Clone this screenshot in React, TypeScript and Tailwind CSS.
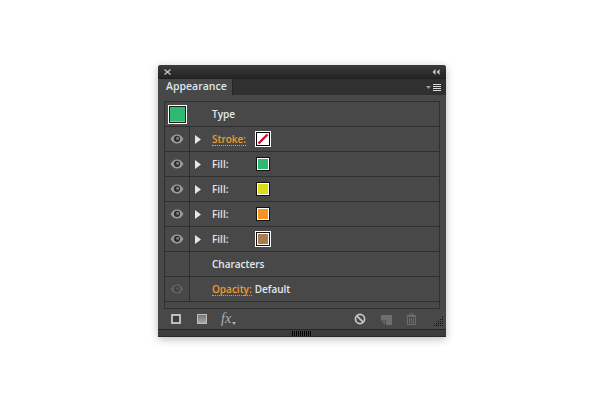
import React from 'react';

const Eye = ({ dim }: { dim?: boolean }) => (
  <svg width="14" height="10" viewBox="0 0 14 10" className={dim ? 'opacity-30' : ''}>
    <path d="M0.5 5 C3 1 5 0.5 7 0.5 C9 0.5 11 1 13.5 5 C11 9 9 9.5 7 9.5 C5 9.5 3 9 0.5 5 Z" fill="#9a9a9a" />
    <circle cx="7" cy="4.8" r="3.1" fill="#2e2e2e" />
    <circle cx="7.6" cy="4.4" r="1.3" fill="#8a8a8a" />
  </svg>
);

const Arrow = () => (
  <svg width="6" height="9" viewBox="0 0 6 9" className="block">
    <path d="M0 0 L6 4.5 L0 9 Z" fill="#e6e6e6" />
  </svg>
);

const Swatch = ({ color, selected }: { color: string; selected?: boolean }) =>
  selected ? (
    <div className="w-[16px] h-[16px] ml-px border border-white bg-[#111] p-px">
      <div className="w-full h-full border border-white" style={{ backgroundColor: color }} />
    </div>
  ) : (
    <div className="w-[14px] h-[14px] border border-[#111] bg-white p-px ml-[2px]">
      <div className="w-full h-full" style={{ backgroundColor: color }} />
    </div>
  );

const Row = ({ children, eye, divider = true, dim }: { children: React.ReactNode; eye?: boolean; divider?: boolean; dim?: boolean }) => (
  <div className="flex h-[25px] border-b border-[#2f2f2f] items-stretch">
    <div className={`w-[25px] flex items-center justify-center shrink-0 ${divider ? 'border-r border-[#2f2f2f]' : 'border-r border-transparent'}`}>
      {eye && <Eye dim={dim} />}
    </div>
    {children}
  </div>
);

const AttrRow = ({ color, selected }: { color: string; selected?: boolean }) => (
  <Row eye>
    <div className="w-[22px] pl-[5px] flex items-center shrink-0">
      <Arrow />
    </div>
    <span className="w-[42px] flex items-center text-[#e4e4e4] font-semibold shrink-0">Fill:</span>
    <div className="flex items-center">
      <Swatch color={color} selected={selected} />
    </div>
  </Row>
);

export default function App() {
  return (
    <div className="w-[600px] h-[400px] bg-white pt-[65px] pl-[158px]">
      <div
        className="relative w-[288px] h-[272px] bg-[#484848] rounded-t-[3px] shadow-[0_2px_8px_rgba(0,0,0,0.28)] flex flex-col text-[10px] select-none"
        style={{ fontFamily: '"Open Sans", "DejaVu Sans", sans-serif' }}
      >
        {/* Title bar */}
        <div className="h-[13px] bg-gradient-to-b from-[#3a3a3a] to-[#242424] rounded-t-[3px] flex items-center justify-between pl-[6px] pr-[6px] shrink-0">
          <svg width="7" height="6" viewBox="0 0 7 6">
            <path d="M0.5 0.5 L6.5 5.5 M6.5 0.5 L0.5 5.5" stroke="#c8c8c8" strokeWidth="1.3" />
          </svg>
          <svg width="8" height="6" viewBox="0 0 8 6">
            <path d="M3.5 0 L0.5 3 L3.5 6 Z M7.5 0 L4.5 3 L7.5 6 Z" fill="#c8c8c8" />
          </svg>
        </div>

        {/* Tab row */}
        <div className="h-[17px] bg-[#303030] flex justify-between items-stretch shrink-0 border-t border-[#1f1f1f]">
          <div className="w-[75px] bg-[#484848] border-r border-[#262626] pl-[8px] flex items-center text-[#dfe4ea] font-semibold text-[10.5px]">
            Appearance
          </div>
          <div className="flex items-center gap-[2px] pr-[5px]">
            <svg width="5" height="3" viewBox="0 0 5 3">
              <path d="M0 0 H5 L2.5 3 Z" fill="#9a9a9a" />
            </svg>
            <svg width="8" height="7" viewBox="0 0 8 7">
              <path d="M0 0.5 H8 M0 2.5 H8 M0 4.5 H8 M0 6.5 H8" stroke="#d8d8d8" strokeWidth="1" />
            </svg>
          </div>
        </div>

        {/* List */}
        <div className="mt-[6px] mx-[6px] h-[208px] border border-[#2f2f2f] shrink-0">
          <div className="flex h-[25px] border-b border-[#2f2f2f] items-center">
            <div className="w-[25px] flex justify-center shrink-0">
              <div className="w-[19px] h-[19px] border border-white bg-[#1e1e1e] p-px">
                <div className="w-full h-full bg-[#2fb872] border-b border-[#a3c26c]" />
              </div>
            </div>
            <span className="ml-[22px] text-[#e4e8ee] font-semibold">Type</span>
          </div>

          <Row eye>
            <div className="w-[22px] pl-[5px] flex items-center shrink-0">
              <Arrow />
            </div>
            <span className="w-[42px] flex items-center shrink-0">
              <span className="text-[#f09a2e] font-semibold border-b border-dotted border-[#f09a2e] leading-[12px]">Stroke:</span>
            </span>
            <div className="flex items-center">
              <div className="w-[16px] h-[16px] ml-px border border-white bg-black p-px">
                <div className="w-full h-full bg-white">
                  <svg viewBox="0 0 12 12" className="block w-full h-full">
                    <path d="M1.5 10.5 L10.5 1.5" stroke="#c8102e" strokeWidth="2.4" />
                  </svg>
                </div>
              </div>
            </div>
          </Row>

          <AttrRow color="#2fb872" />
          <AttrRow color="#dcdc1a" />
          <AttrRow color="#f7931e" />
          <AttrRow color="#a97c50" selected />

          <Row>
            <span className="ml-[22px] flex items-center text-[#e4e8ee] font-semibold">Characters</span>
          </Row>

          <Row eye dim>
            <div className="pl-[22px] flex items-center gap-[3px]">
              <span className="text-[#f09a2e] font-semibold border-b border-dotted border-[#f09a2e] leading-[12px]">Opacity:</span>
              <span className="text-[#e4e8ee] font-semibold">Default</span>
            </div>
          </Row>
        </div>

        {/* Footer icons */}
        <div className="h-[20px] flex items-center pl-[13px] shrink-0">
          <div className="w-[10px] h-[10px] border-2 border-[#bcbcbc] bg-[#3c3c3c]" />
          <div className="ml-[16px] w-[10px] h-[10px] border border-[#bdbdbd] bg-gradient-to-b from-[#777] to-[#a8a8a8]" />
          <div className="ml-[14px] w-[17px] flex items-end shrink-0">
            <span className="italic text-[14px] leading-[14px] text-[#b0b0b0]" style={{ fontFamily: '"Liberation Serif", serif' }}>fx</span>
            <svg width="4" height="3" viewBox="0 0 4 3" className="mb-[1px] ml-px">
              <path d="M0 0 H4 L2 3 Z" fill="#b0b0b0" />
            </svg>
          </div>
          <svg width="12" height="12" viewBox="0 0 12 12" className="ml-[116px]">
            <circle cx="6" cy="6" r="4.6" fill="none" stroke="#c8c8c8" strokeWidth="1.7" />
            <path d="M2.8 2.8 L9.2 9.2" stroke="#c8c8c8" strokeWidth="1.7" />
          </svg>
          <svg width="11" height="11" viewBox="0 0 11 11" className="ml-[15px]">
            <path d="M0 1 H11 V11 H5 V6.5 H0 Z" fill="#6e6e6e" />
            <path d="M0.5 7.5 H4 V10.5 Z" fill="#6e6e6e" />
          </svg>
          <svg width="11" height="12" viewBox="0 0 11 12" className="ml-[14px]">
            <path d="M0.5 2.5 H10.5 M4 2 V0.7 H7 V2" stroke="#6e6e6e" fill="none" />
            <path d="M1.5 3.5 H9.5 V11.5 H1.5 Z M3.5 5 V10.5 M5.5 5 V10.5 M7.5 5 V10.5" stroke="#6e6e6e" fill="none" />
          </svg>
        </div>

        {/* Resize grip */}
        <svg width="9" height="9" viewBox="0 0 9 9" className="absolute left-[276px] top-[252px]" shapeRendering="crispEdges">
          <path d="M8.5 0 V1 M6.5 2 V3 M8.5 2 V3 M4.5 4 V5 M6.5 4 V5 M8.5 4 V5 M2.5 6 V7 M4.5 6 V7 M6.5 6 V7 M8.5 6 V7 M0.5 8 V9 M2.5 8 V9 M4.5 8 V9 M6.5 8 V9 M8.5 8 V9" stroke="#111" strokeWidth="1" />
        </svg>

        {/* Bottom strip */}
        <div className="flex-1 bg-[#3c3c3c] border-t border-[#262626] border-b border-b-[#2a2a2a] flex items-center justify-center">
          <div className="w-[20px] h-[5px] bg-[repeating-linear-gradient(90deg,#000_0,#000_1px,#444_1px,#444_2px)]" />
        </div>
      </div>
    </div>
  );
}
